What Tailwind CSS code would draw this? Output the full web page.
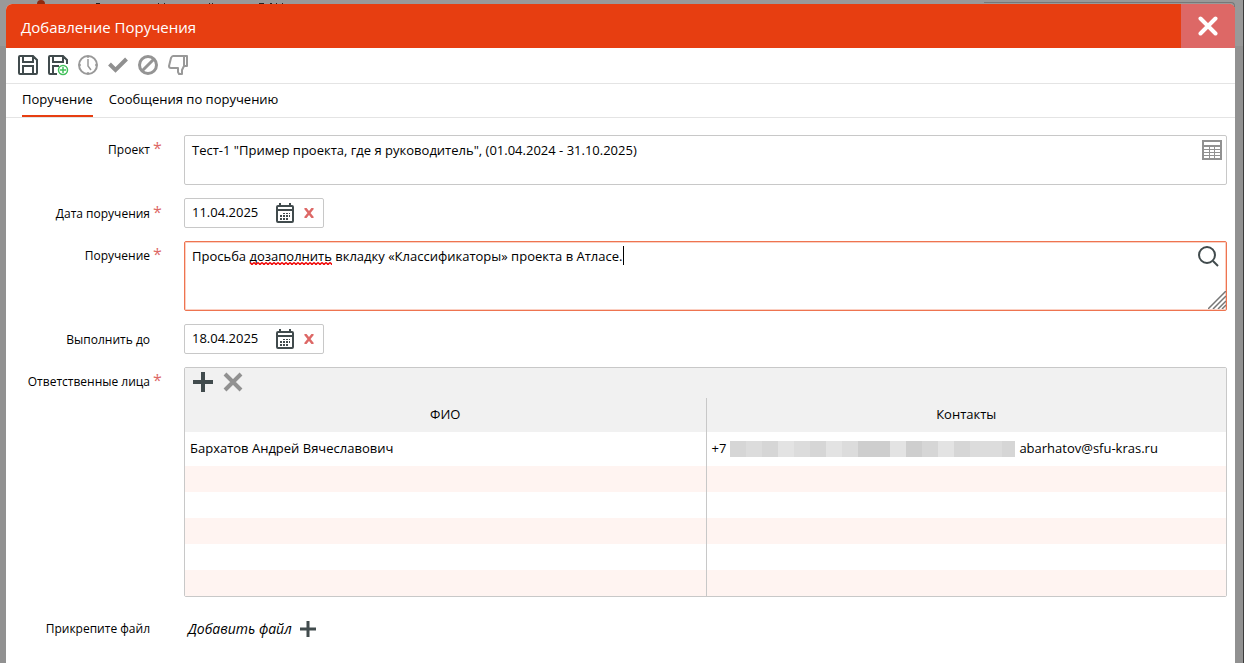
<!DOCTYPE html>
<html lang="ru">
<head>
  <meta charset="UTF-8" />
  <meta name="viewport" content="width=device-width, initial-scale=1.0"/>
  <title>Добавление Поручения</title>
  <script src="https://cdn.jsdelivr.net/npm/@tailwindcss/browser@4"></script>
</head>
<body class="bg-[#919191] text-black font-['Open_Sans','Noto_Sans',sans-serif] text-[13px]">
  <div class="relative min-h-screen flex flex-col pt-1 pl-1.5 pr-2 border-r border-[#3c3c3c]">
    <!-- Page header behind the dialog -->
    <div class="absolute inset-x-0 top-0 h-[46px] bg-[#999999]">
      <svg class="w-[300px] h-1" viewBox="0 0 300 4" fill="#222">
        <path d="M37 4a4 4 0 0 1 8 0z" fill="#8f2a10" />
        <path d="M96 3h4v1h-4zM158 3h1v1h-1zM164 3h1v1h-1zM209 3h1v1h-1zM212 3h1v1h-1zM259 3h5v1h-5zM270 3h2v1h-2zM276 3h1v1h-1zM282 3h1v1h-1z" />
      </svg>
      <div class="absolute right-2 top-0.5 w-[251px] h-2 border-t border-r rounded-tr-sm border-[#777]"></div>
    </div>

    <div role="dialog" aria-labelledby="dialog-title" class="relative grow flex flex-col bg-white rounded-t-md overflow-hidden">
      <div class="flex h-11 bg-[#e73e11] text-white">
        <h1 id="dialog-title" class="grow self-center pl-[15px] pt-0.5 text-[15px]">Добавление Поручения</h1>
        <button aria-label="Закрыть" class="w-[54px] flex items-center justify-center bg-[#dd6866]">
          <svg class="w-5 h-5" viewBox="0 0 20 20" stroke="#fff" stroke-width="4" stroke-linecap="round"><path d="M2.500 2.500l15 15M17.500 2.500l-15 15" /></svg>
        </button>
      </div>

      <!-- Toolbar -->
      <div class="flex items-start gap-2 h-9 pt-1.5 pl-[11px] border-b border-[#e4e4e4]">
        <button aria-label="Сохранить">
          <svg class="w-[22px] h-[22px]" viewBox="0 0 22 22" fill="none" stroke="#414b4d" stroke-width="2"><path d="M2 3q0-1 1-1h13l4 4v13q0 1-1 1H3q-1 0-1-1zM6 2v6h10V2M6 20v-8h10v8" /></svg>
        </button>
        <button aria-label="Сохранить и добавить">
          <svg class="w-[22px] h-[22px]" viewBox="0 0 22 22" fill="none" stroke="#414b4d" stroke-width="2"><path d="M10 20H3q-1 0-1-1V3q0-1 1-1h13l4 4v4M6 2v6h10V2M6 20v-8h6" /><circle cx="16" cy="16" r="4.500" fill="#fff" stroke="#40c05a" stroke-width="1.500" /><path d="M16 13v6M13 16h6" stroke="#40c05a" stroke-width="1.500" /></svg>
        </button>
        <button aria-label="Отложить">
          <svg class="w-[22px] h-[22px]" viewBox="0 0 22 22" fill="none" stroke="#999" stroke-width="2"><circle cx="11" cy="11" r="9" /><path d="M11 5v7l3 4M11 2v2M11 18v2M2 11h2M18 11h2" stroke-width="1.500" /></svg>
        </button>
        <button aria-label="Принять">
          <svg class="w-[22px] h-[22px]" viewBox="0 0 22 22" fill="none" stroke="#909090" stroke-width="4"><path d="M2.500 10l6 6L19.500 5" /></svg>
        </button>
        <button aria-label="Отменить">
          <svg class="w-[22px] h-[22px]" viewBox="0 0 22 22" fill="none" stroke="#949494" stroke-width="3"><circle cx="11" cy="11" r="8.500" /><path d="M5 17L17 5" /></svg>
        </button>
        <button aria-label="Отклонить">
          <svg class="w-[22px] h-[22px]" viewBox="0 0 22 22" fill="none" stroke="#999" stroke-width="2" stroke-linejoin="round"><path d="M6 2h14v10h-3l-2 4v4h-3l-1-2v-4H4q-2 0-2-2l2-8q1-2 2-2zM17 2v10" /></svg>
        </button>
      </div>

      <!-- Tabs -->
      <nav class="flex gap-4 h-[34px] pl-4 border-b border-[#e4e4e4]">
        <a href="#order" class="pt-1.5 border-b-2 border-[#e73e11]">Поручение</a>
        <a href="#messages" class="pt-1.5">Сообщения по поручению</a>
      </nav>

      <form class="grid grid-cols-[155px_1fr] gap-x-[23px] gap-y-[13px] pt-[17px] pr-2 pb-4">
        <label for="project" class="flex justify-end gap-[3px] pt-[5px] text-xs leading-5">Проект <span class="w-2 text-[#dd6866] text-base leading-4">*</span></label>
        <div class="relative flex">
          <textarea id="project" class="grow h-[50px] px-[7px] py-1 leading-5 border border-[#c8c8c8] rounded-xs resize-none outline-none">Тест-1 "Пример проекта, где я руководитель", (01.04.2024 - 31.10.2025)</textarea>
          <button type="button" aria-label="Выбрать проект" class="absolute top-[5px] right-[5px]">
            <svg class="w-5 h-5" viewBox="0 0 20 20"><path fill="#919191" d="M0 0h20v20H0z" /><path fill="#fff" d="M2 2h16v3H2zM2 7h5v2H2zM8 7h4v2H8zM13 7h5v2h-5zM2 10h5v2H2zM8 10h4v2H8zM13 10h5v2h-5zM2 13h5v2H2zM8 13h4v2H8zM13 13h5v2h-5zM2 16h5v2H2zM8 16h4v2H8zM13 16h5v2h-5z" /></svg>
          </button>
        </div>

        <label for="order-date" class="flex justify-end gap-[3px] pt-1.5 text-xs leading-5">Дата поручения <span class="w-2 text-[#dd6866] text-base leading-4">*</span></label>
        <div class="flex items-center w-[140px] h-[30px] px-[7px] border border-[#c8c8c8] rounded-xs">
          <input id="order-date" type="text" value="11.04.2025" class="w-[84px] outline-none" />
          <button type="button" aria-label="Календарь">
            <svg class="w-[18px] h-5" viewBox="0 0 18 20"><path fill="#414b4d" fill-rule="evenodd" d="M3 0h2v2h8V0h2v2h1q2 0 2 2v14q0 2-2 2H2q-2 0-2-2V4q0-2 2-2h1zM2 4v2h14V4zM2 8v10h14V8z" /><path fill="#414b4d" d="M7 10h2v1H7zM10 10h2v1h-2zM13 10h1v1h-1zM4 12h2v2H4zM7 12h2v2H7zM10 12h2v2h-2zM13 12h1v2h-1zM4 15h2v2H4zM7 15h2v2H7zM10 15h2v2h-2z" /></svg>
          </button>
          <button type="button" aria-label="Очистить" class="ml-2.5">
            <svg class="w-2.5 h-2.5" viewBox="0 0 10 10" stroke="#dd6866" stroke-width="2.500"><path d="M1 0l8 10M9 0L1 10" /></svg>
          </button>
        </div>

        <label for="order" class="flex justify-end gap-[3px] pt-[5px] text-xs leading-5">Поручение <span class="w-2 text-[#dd6866] text-base leading-4">*</span></label>
        <div class="relative flex">
          <textarea id="order" spellcheck="false" class="grow h-[70px] px-[7px] py-1 leading-5 border border-[#ee7450] ring-1 ring-inset ring-[#fbd0c3] rounded-xs resize-none outline-none">Просьба дозаполнить вкладку «Классификаторы» проекта в Атласе.</textarea>
          <!-- Spelling mark and text cursor -->
          <svg class="absolute top-[21px] left-[66px] w-[82px] h-[3px]">
            <defs><pattern id="wave" width="4" height="3" patternUnits="userSpaceOnUse"><path d="M0 .5l2 2 2-2" fill="none" stroke="#f00000" stroke-width="1.500" /></pattern></defs>
            <path d="M0 0h82v3H0z" fill="url(#wave)" />
          </svg>
          <span class="absolute top-[5px] left-[439px] w-px h-[19px] bg-black"></span>
          <button type="button" aria-label="Поиск" class="absolute top-[5px] right-2">
            <svg class="w-[21px] h-[21px]" viewBox="0 0 21 21" fill="none" stroke="#414b4d" stroke-width="2"><circle cx="9" cy="9" r="8" /><path d="M15 15l5 5" /></svg>
          </button>
          <svg class="absolute bottom-0.5 right-px w-[18px] h-[18px]" viewBox="0 0 18 18" stroke="#777" stroke-width="1.500"><path d="M0 18L18 0M5 18L18 5M10 18l8-8M14 18l4-4" /></svg>
        </div>

        <label for="due-date" class="flex justify-end gap-[3px] pt-1.5 text-xs leading-5">Выполнить до <span class="w-2"></span></label>
        <div class="flex items-center w-[140px] h-[30px] px-[7px] border border-[#c8c8c8] rounded-xs">
          <input id="due-date" type="text" value="18.04.2025" class="w-[84px] outline-none" />
          <button type="button" aria-label="Календарь">
            <svg class="w-[18px] h-5" viewBox="0 0 18 20"><path fill="#414b4d" fill-rule="evenodd" d="M3 0h2v2h8V0h2v2h1q2 0 2 2v14q0 2-2 2H2q-2 0-2-2V4q0-2 2-2h1zM2 4v2h14V4zM2 8v10h14V8z" /><path fill="#414b4d" d="M7 10h2v1H7zM10 10h2v1h-2zM13 10h1v1h-1zM4 12h2v2H4zM7 12h2v2H7zM10 12h2v2h-2zM13 12h1v2h-1zM4 15h2v2H4zM7 15h2v2H7zM10 15h2v2h-2z" /></svg>
          </button>
          <button type="button" aria-label="Очистить" class="ml-2.5">
            <svg class="w-2.5 h-2.5" viewBox="0 0 10 10" stroke="#dd6866" stroke-width="2.500"><path d="M1 0l8 10M9 0L1 10" /></svg>
          </button>
        </div>

        <div id="people-label" class="flex justify-end gap-[3px] pt-[5px] text-xs leading-5">Ответственные лица <span class="w-2 text-[#dd6866] text-base leading-4">*</span></div>
        <div class="border border-[#c8c8c8] rounded-xs">
          <div class="flex items-start gap-2.5 h-[30px] pt-1 pl-2 bg-[#f1f1f1]">
            <button type="button" aria-label="Добавить"><svg class="w-5 h-5" viewBox="0 0 20 20" stroke="#414b4d" stroke-width="4"><path d="M10 0v20M0 10h20" /></svg></button>
            <button type="button" aria-label="Удалить"><svg class="w-5 h-5" viewBox="0 0 20 20" stroke="#919191" stroke-width="4"><path d="M2 2l16 16M18 2L2 18" /></svg></button>
          </div>
          <table aria-labelledby="people-label" class="w-full table-fixed border-separate border-spacing-0">
            <thead class="bg-[#f1f1f1]">
              <tr class="h-[34px]">
                <th class="w-1/2 font-normal">ФИО</th>
                <th class="font-normal border-l border-[#c8c8c8]">Контакты</th>
              </tr>
            </thead>
            <tbody>
              <tr class="h-[34px]">
                <td class="px-[5px]">Бархатов Андрей Вячеславович</td>
                <td class="px-[5px] border-l border-[#c8c8c8]">
                  <div class="flex items-center gap-1">
                    <span>+7</span>
                    <svg class="w-[285px] h-4" viewBox="0 0 285 16" shape-rendering="crispEdges">
                      <path fill="#d6d6d6" d="M0 0h285v16H0z" />
                      <path fill="#dcdcdc" d="M16 0h16v16H16zM64 0h16v16H64zM112 0h16v16h-16zM240 0h32v16h-32z" />
                      <path fill="#e3e3e3" d="M48 0h16v16H48zM96 0h16v16H96zM160 0h16v16h-16zM208 0h16v16h-16z" />
                      <path fill="#cecece" d="M128 0h32v16h-32zM176 0h16v16h-16z" />
                    </svg>
                    <span>abarhatov@sfu-kras.ru</span>
                  </div>
                </td>
              </tr>
              <tr class="h-[26px] bg-[#fff4f1]"><td></td><td class="border-l border-[#c8c8c8]"></td></tr>
              <tr class="h-[26px]"><td></td><td class="border-l border-[#c8c8c8]"></td></tr>
              <tr class="h-[26px] bg-[#fff4f1]"><td></td><td class="border-l border-[#c8c8c8]"></td></tr>
              <tr class="h-[26px]"><td></td><td class="border-l border-[#c8c8c8]"></td></tr>
              <tr class="h-[26px] bg-[#fff4f1]"><td></td><td class="border-l border-[#c8c8c8]"></td></tr>
            </tbody>
          </table>
        </div>

        <div class="flex justify-end gap-[3px] pt-[9px] text-xs leading-5">Прикрепите файл <span class="w-2"></span></div>
        <button type="button" class="justify-self-start flex items-center gap-2 pl-1 pt-2 italic text-sm">
          Добавить файл
          <svg class="w-4 h-4" viewBox="0 0 16 16" stroke="#414b4d" stroke-width="3"><path d="M8 0v16M0 8h16" /></svg>
        </button>
      </form>
    </div>
  </div>
</body>
</html>
